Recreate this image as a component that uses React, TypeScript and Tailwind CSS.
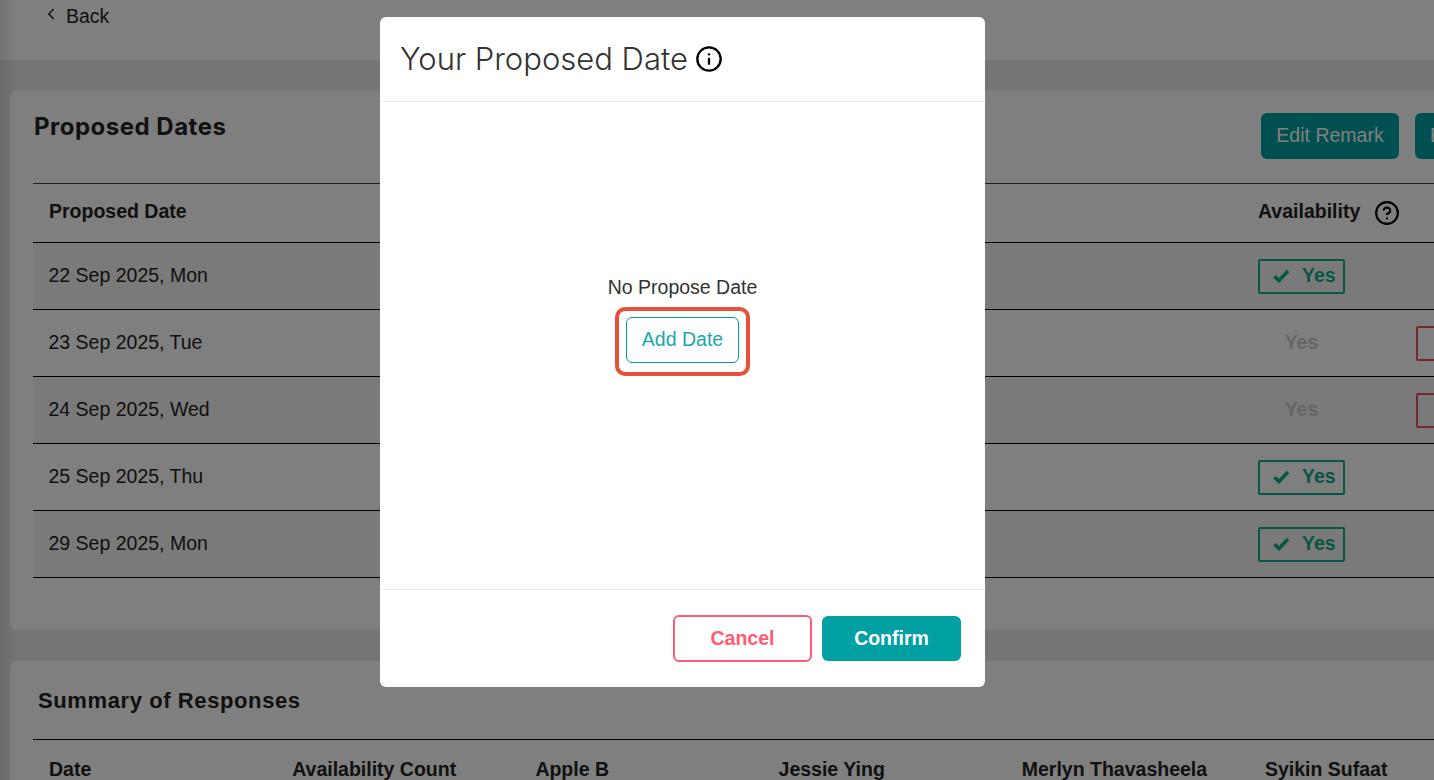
import React from "react";
import { ChevronLeft, CircleHelp, Info } from "lucide-react";

// ─── Data ─────────────────────────────────────────────────────────────────────

const proposedRows = [
  { date: "22 Sep 2025, Mon", available: true },
  { date: "23 Sep 2025, Tue", available: false },
  { date: "24 Sep 2025, Wed", available: false },
  { date: "25 Sep 2025, Thu", available: true },
  { date: "29 Sep 2025, Mon", available: true },
];

const summaryColumns = [
  "Date",
  "Availability Count",
  "Apple B",
  "Jessie Ying",
  "Merlyn Thavasheela",
  "Syikin Sufaat",
];

const arial = "font-['Liberation_Sans',Arial,sans-serif]";
const heading = "font-['Inter',sans-serif]";

// ─── Availability cell ────────────────────────────────────────────────────────

function AvailabilityCell({ available }: { available: boolean }) {
  if (available) {
    return (
      <div className="flex h-[35px] w-[87px] items-center gap-[12px] rounded-[2px] border-2 border-[#12ad8c] pl-[13px] text-[19.5px] font-bold text-[#12ad8c]">
        <svg width="17" height="14" viewBox="0 0 17 14" fill="none" stroke="currentColor" strokeWidth="3.6">
          <path d="M1.5 7.2 L6 11.6 L15 2" />
        </svg>
        <span>Yes</span>
      </div>
    );
  }
  return (
    <div className="flex items-center">
      <span className="flex h-[35px] w-[87px] shrink-0 items-center justify-center text-[19.5px] font-bold text-[#cccccc]">
        Yes
      </span>
      <span className="ml-[71px] h-[35px] w-[87px] shrink-0 rounded-[2px] border-2 border-[#e2545c]" />
    </div>
  );
}

// ─── Page behind the dialog ───────────────────────────────────────────────────

function Page() {
  return (
    <div className={`flex h-[780px] w-[1434px] flex-col overflow-hidden bg-[#e9eaee] text-[#222] ${arial}`}>
      <header className="flex h-[60px] shrink-0 items-start gap-[6px] bg-white pl-[42px] pt-[4px] text-[19.5px] leading-[24px]">
        <ChevronLeft size={18} strokeWidth={2} className="mt-[1px]" />
        <span>Back</span>
      </header>

      <section className="ml-[10px] mt-[30px] h-[540px] w-[1424px] shrink-0 rounded-l-[6px] bg-white pl-[23px] pt-[23px]">
        <div className="flex h-[70px] items-start justify-between">
          <h2 className={`pl-[1px] pt-[1px] text-[24px] font-bold leading-[26px] tracking-[0.5px] ${heading}`}>
            Proposed Dates
          </h2>
          <div className="flex shrink-0 gap-[16px]">
            <button className="h-[46px] w-[138px] rounded-[6px] bg-[#00a0a3] text-[19.5px] text-white">Edit Remark</button>
            <div className="h-[46px] w-[19px]">
              <button className="h-[46px] w-[138px] rounded-[6px] bg-[#00a0a3] pl-[15px] text-left text-[19.5px] text-white">
                Edit
              </button>
            </div>
          </div>
        </div>
        <div className="flex h-[60px] items-center justify-between border-y border-y-[#444] border-b-black pl-[16px] text-[19.5px] font-bold">
          <span className="-mt-[3px]">Proposed Date</span>
          <div className="flex w-[176px] items-center gap-[14px]">
            <span className="-mt-[3px]">Availability</span>
            <CircleHelp size={26} strokeWidth={2} className="text-black" />
          </div>
        </div>
        {proposedRows.map((row, i) => (
          <div
            key={row.date}
            className={`flex h-[67px] items-center justify-between border-b border-black pl-[15.5px] text-[19.5px] ${i % 2 === 0 ? "bg-[#f5f5f5]" : "bg-white"}`}
          >
            <span>{row.date}</span>
            <div className="w-[176px]">
              <AvailabilityCell available={row.available} />
            </div>
          </div>
        ))}
      </section>

      <section className="ml-[10px] mt-[31px] h-[200px] w-[1424px] shrink-0 rounded-l-[6px] bg-white pl-[23px]">
        <h2 className="flex h-[78px] items-center pl-[5px] text-[22px] font-bold tracking-[0.6px]">Summary of Responses</h2>
        <div className="flex h-[60px] w-[1500px] items-center border-t border-black text-[19.5px] font-bold">
          {summaryColumns.map((col) => (
            <span key={col} className="w-[243.2px] shrink-0 pl-[16px]">
              {col}
            </span>
          ))}
        </div>
      </section>
    </div>
  );
}

// ─── Main component ───────────────────────────────────────────────────────────

export default function App() {
  return (
    <div className="relative h-[780px] w-[1434px] overflow-hidden">
      <Page />
      <div className="absolute inset-0 bg-black/50" />
      <div className="absolute inset-y-0 left-0 w-[16px] bg-gradient-to-r from-black/10 to-transparent" />

      {/* Dialog */}
      <div className={`absolute left-[380px] top-[17px] flex h-[670px] w-[605px] flex-col rounded-[6px] bg-white ${arial}`}>
        <div className="flex h-[85px] shrink-0 items-center gap-[7px] border-b border-[#e9ecef] pl-[20px]">
          <h1 className={`text-[31px] font-light text-[#333] ${heading}`}>Your Proposed Date</h1>
          <Info size={28} strokeWidth={2} className="text-black" />
        </div>

        <div className="flex flex-1 flex-col items-center pt-[173px]">
          <p className="text-[19.5px] leading-[24px] text-[#333]">No Propose Date</p>
          <div className="mt-[8px] rounded-[10px] border-4 border-[#e8503a] px-[7px] pb-[9px] pt-[6px]">
            <button className="h-[46px] w-[113px] rounded-[6px] border border-[#00a0a3] text-[19.5px] text-[#17a9ad]">
              Add Date
            </button>
          </div>
        </div>

        <div className="flex h-[98px] shrink-0 items-start justify-end gap-[10px] border-t border-[#e9ecef] pr-[24px] pt-[25px]">
          <button className="h-[47px] w-[139px] rounded-[6px] border-2 border-[#ff5c72] text-[19.5px] font-bold text-[#ff5c72]">
            Cancel
          </button>
          <button className="mt-[1px] h-[45px] w-[139px] rounded-[6px] bg-[#00a0a3] text-[19.5px] font-bold text-white">
            Confirm
          </button>
        </div>
      </div>
    </div>
  );
}
